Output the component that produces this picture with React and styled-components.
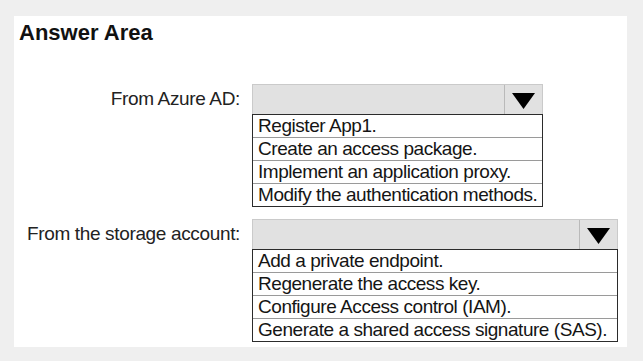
import React from "react";
import styled, { createGlobalStyle } from "styled-components";

const Global = createGlobalStyle`
  html, body { margin: 0; padding: 0; background: #efefef; }
  body { font-family: "Liberation Sans", Arial, sans-serif; color: #1a1a1a; }
`;

const Page = styled.div`
  width: 643px;
  height: 361px;
  box-sizing: border-box;
  padding: 16px 16px 14px 14px;
`;

const Panel = styled.div`
  background: #fff;
  height: 100%;
  box-sizing: border-box;
  padding: 6px 0 0 0;
`;

const Title = styled.h1`
  margin: 0 0 0 5px;
  font-size: 22px;
  line-height: 22px;
  font-weight: bold;
  color: #111;
`;

const Form = styled.div`
  margin-top: 40px;
  display: grid;
  grid-template-columns: 226px auto;
  column-gap: 12px;
  row-gap: 12px;
  align-items: start;
`;

const Label = styled.div`
  height: 30px;
  display: flex;
  align-items: center;
  justify-content: flex-end;
  font-size: 19px;
  letter-spacing: -0.35px;
  color: #222;
  white-space: nowrap;
`;

const Select = styled.div`
  width: ${(p) => p.$width}px;
`;

const Box = styled.div`
  height: 30px;
  box-sizing: border-box;
  display: flex;
  background: #e1e1e1;
  border: 1px solid #cacaca;
  border-bottom: none;
`;

const Field = styled.div`
  flex: 1;
`;

const Arrow = styled.div`
  width: 38px;
  border-left: 1px solid #b9b9b9;
  display: flex;
  align-items: center;
  justify-content: center;
  padding-top: 2px;
  box-sizing: border-box;
`;

const List = styled.ul`
  margin: 0;
  padding: 0;
  list-style: none;
  border: 1px solid #2b2b2b;
`;

const Item = styled.li`
  height: 22px;
  line-height: 22px;
  padding-left: 5px;
  font-size: 19px;
  letter-spacing: -0.45px;
  color: #151515;
  white-space: nowrap;
  & + & { border-top: 1px solid #9a9a9a; }
`;

const Triangle = () => (
  <svg width="23" height="16" viewBox="0 0 23 16">
    <polygon points="0,0 23,0 11.5,16" fill="#000" />
  </svg>
);

const questions = [
  {
    label: "From Azure AD:",
    width: 291,
    options: [
      "Register App1.",
      "Create an access package.",
      "Implement an application proxy.",
      "Modify the authentication methods.",
    ],
  },
  {
    label: "From the storage account:",
    width: 366,
    options: [
      "Add a private endpoint.",
      "Regenerate the access key.",
      "Configure Access control (IAM).",
      "Generate a shared access signature (SAS).",
    ],
  },
];

export default function App() {
  return (
    <>
      <Global />
      <Page>
        <Panel>
          <Title>Answer Area</Title>
          <Form>
            {questions.map((q) => (
              <React.Fragment key={q.label}>
                <Label>{q.label}</Label>
                <Select $width={q.width}>
                  <Box>
                    <Field />
                    <Arrow>
                      <Triangle />
                    </Arrow>
                  </Box>
                  <List>
                    {q.options.map((o) => (
                      <Item key={o}>{o}</Item>
                    ))}
                  </List>
                </Select>
              </React.Fragment>
            ))}
          </Form>
        </Panel>
      </Page>
    </>
  );
}
